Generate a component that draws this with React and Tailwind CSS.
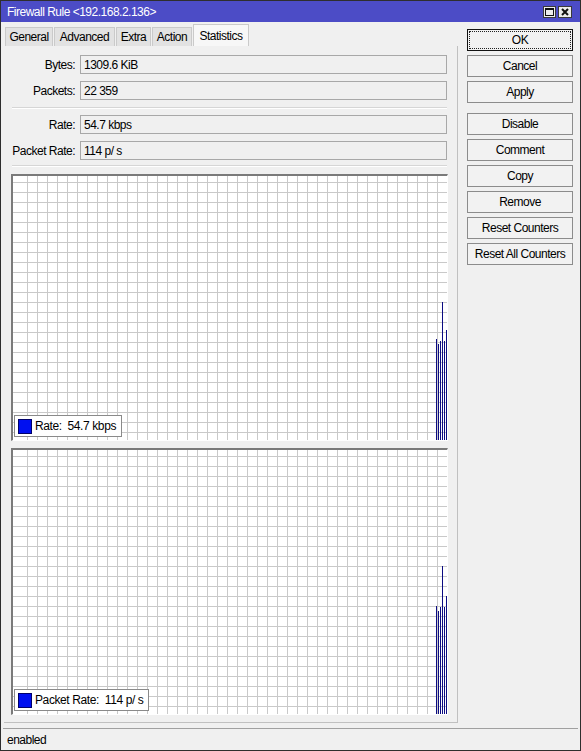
import React from "react";

const font = { fontFamily: '"Liberation Sans", Arial, sans-serif' };

function Chart({ label, value, bars }) {
    // bars: tops in svg coords (inner area 434 x 264)
    const lines = [];
    for (let x = 14; x < 434; x += 10) lines.push(<line key={"v" + x} x1={x + 0.5} y1="0" x2={x + 0.5} y2="264" stroke="#c9c9c9" strokeWidth="1" />);
    for (let y = 6; y < 264; y += 10) lines.push(<line key={"h" + y} x1="0" y1={y + 0.5} x2="434" y2={y + 0.5} stroke="#c9c9c9" strokeWidth="1" />);
    return (
        <div className="relative h-[267px] border-t-2 border-l-2 border-t-[#7a7a7a] border-l-[#7a7a7a] border-b border-r border-b-white border-r-white bg-white">
            <svg width="434" height="264" className="block">
                {lines}
                {bars.map((top, i) => (
                    <line key={i} x1={423.5 + i * 2} y1={top} x2={423.5 + i * 2} y2="264" stroke="#0c0c82" strokeWidth="1" />
                ))}
            </svg>
            <div className="absolute left-[1px] bottom-[3px] h-[22px] flex items-center gap-[3px] pl-[3px] pr-[5px] bg-white border border-[#8a8a8a] text-[12px] tracking-[-0.4px] text-black whitespace-pre">
                <span className="w-[14px] h-[15px] bg-[#0010f0] border border-[#00006a]"></span>
                <span>{label}:  {value}</span>
            </div>
        </div>
    );
}

function Field({ label, value }) {
    return (
        <div className="flex items-center h-[19px]">
            <div className="w-[71px] text-right">{label}:</div>
            <div className="ml-[5px] flex-1 h-[19px] border border-[#a8a8a8] bg-[#f0f0f0] pl-[3px] flex items-center">{value}</div>
        </div>
    );
}

function Btn({ children, className = "" }) {
    return (
        <div className={"h-[22px] border border-[#8c8c8c] bg-[#f2f2f2] flex items-center justify-center " + className}>
            {children}
        </div>
    );
}

export default function App() {
    const tabs = [
        ["General", "w-[48px]"],
        ["Advanced", "w-[61px]"],
        ["Extra", "w-[35px]"],
        ["Action", "w-[40px]"],
    ];

    return (
        <div style={font} className="w-[581px] h-[751px] border border-[#2e2e2e] bg-[#f0f0f0] flex flex-col text-[12px] tracking-[-0.5px] text-black">
            {/* title */}
            <div className="h-[21px] bg-[#4c4cc6] flex items-center pl-[6px] pr-[8px] text-white">
                <span>Firewall Rule &lt;192.168.2.136&gt;</span>
                <div className="ml-auto flex gap-[2px] pt-[1px]">
                    <div className="w-[13px] h-[12px] bg-[#ececec] border border-[#3a3a3a] flex items-center justify-center">
                        <svg width="9" height="8"><rect x="0.5" y="0.5" width="8" height="7" fill="none" stroke="#111" /><line x1="0" y1="1.5" x2="9" y2="1.5" stroke="#111" /></svg>
                    </div>
                    <div className="w-[14px] h-[12px] bg-[#ececec] border border-[#3a3a3a] flex items-center justify-center">
                        <svg width="8" height="8"><path d="M1 1 L7 7 M7 1 L1 7" stroke="#111" strokeWidth="2" /></svg>
                    </div>
                </div>
            </div>

            <div className="flex flex-1">
                {/* left */}
                <div className="ml-[3px] w-[454px] flex flex-col mb-[2px]">
                    <div className="h-[24px] flex items-end gap-[1px] pl-[1px]">
                        {tabs.map(([t, w]) => (
                            <div key={t} className={w + " h-[19px] bg-[#e2e2e2] border border-b-0 border-[#cacaca] flex items-center justify-center"}>{t}</div>
                        ))}
                        <div className="w-[56px] h-[22px] bg-[#f7f7f7] border border-b-0 border-[#cacaca] flex items-start pt-[2px] justify-center">Statistics</div>
                    </div>
                    <div className="flex-1 border-r border-b border-[#c0c0c0] flex flex-col pt-[9px]">
                        <div className="pr-[10px] flex flex-col gap-[7px]">
                            <Field label="Bytes" value="1309.6 KiB" />
                            <Field label="Packets" value="22 359" />
                        </div>
                        <div className="ml-[8px] mr-[10px] mt-[7px] border-t border-[#d6d6d6] border-b border-b-white"></div>
                        <div className="pr-[10px] flex flex-col gap-[7px] mt-[6px]">
                            <Field label="Rate" value="54.7 kbps" />
                            <Field label="Packet Rate" value="114 p/ s" />
                        </div>
                        <div className="ml-[8px] mr-[10px] mt-[5px] border-t border-[#d6d6d6] border-b border-b-white"></div>
                        <div className="pl-[7px] pr-[9px] mt-[7px] flex flex-col gap-[7px]">
                            <Chart label="Rate" value="54.7 kbps" bars={[163, 168, 165, 126, 165, 154]} />
                            <Chart label="Packet Rate" value="114 p/ s" bars={[156, 161, 157, 116, 157, 146]} />
                        </div>
                    </div>
                </div>

                {/* right buttons */}
                <div className="ml-[9px] w-[106px] pt-[7px] flex flex-col gap-[4px]">
                    <div className="h-[22px] border border-[#111] p-[1px] bg-[#f2f2f2]">
                        <div className="h-full border border-dotted border-[#222] flex items-center justify-center">OK</div>
                    </div>
                    <Btn>Cancel</Btn>
                    <Btn>Apply</Btn>
                    <Btn className="mt-[6px]">Disable</Btn>
                    <Btn>Comment</Btn>
                    <Btn>Copy</Btn>
                    <Btn>Remove</Btn>
                    <Btn>Reset Counters</Btn>
                    <Btn>Reset All Counters</Btn>
                </div>
            </div>

            {/* status */}
            <div className="mt-[3px] h-[22px] mx-[2px] border-t border-[#a0a0a0] flex items-center pl-[4px]">enabled</div>
        </div>
    );
}
